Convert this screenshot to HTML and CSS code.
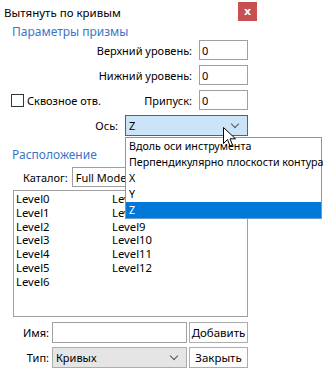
FILE: index.html
```html
<!DOCTYPE html>
<html lang="ru">
<head>
  <meta charset="UTF-8" />
  <title>Вытянуть по кривым</title>
  <link rel="stylesheet" href="styles.css">
</head>
<body>

<div class="win">
  <!-- ===== Title bar ===== -->
  <div class="titlebar">
    <span class="title">Вытянуть по кривым</span>
    <button class="close">x</button>
  </div>

  <!-- ===== Prism params ===== -->
  <div class="group-title">Параметры призмы</div>
  <div class="row first">
    <label>Верхний уровень:</label><input class="num" value="0">
  </div>
  <div class="row">
    <label>Нижний уровень:</label><input class="num" value="0">
  </div>
  <div class="row">
    <span class="check"><span class="box"></span>Сквозное отв.</span>
    <label>Припуск:</label><input class="num" value="0">
  </div>
  <div class="row axis">
    <label>Ось:</label>
    <div class="combo active"><span>Z</span><span class="chev"></span></div>
  </div>

  <!-- ===== Placement ===== -->
  <div class="group-title place">Расположение</div>
  <div class="row cat">
    <label>Каталог:</label>
    <div class="combo plain"><span>Full Model</span></div>
  </div>
  <div class="levels">
    <span>Level0</span><span>Level1</span><span>Level2</span><span>Level3</span>
    <span>Level4</span><span>Level5</span><span>Level6</span>
    <span>Level7</span><span>Level8</span><span>Level9</span><span>Level10</span>
    <span>Level11</span><span>Level12</span>
  </div>

  <div class="row bottom">
    <label>Имя:</label><input class="name" value="">
    <button class="btn">Добавить</button>
  </div>
  <div class="row bottom">
    <label>Тип:</label>
    <div class="combo gray"><span>Кривых</span><span class="chev"></span></div>
    <button class="btn">Закрыть</button>
  </div>

  <!-- ===== Open dropdown (overlay) ===== -->
  <ul class="dropdown">
    <li>Вдоль оси инструмента</li>
    <li>Перпендикулярно плоскости контура</li>
    <li>X</li>
    <li>Y</li>
    <li class="sel">Z</li>
  </ul>

  <!-- mouse pointer -->
  <svg class="pointer" width="13" height="21" viewBox="0 0 13 21">
    <path d="M0.5 0.5 L0.5 16.5 L4.5 12.5 L7 19 L9.5 18 L7 11.8 L12.5 11.8 Z" fill="#fff" stroke="#000" stroke-width="1"/>
  </svg>
</div>

</body>
</html>
```

FILE: styles.css
```css
:root { --blue:#0078d7; --head:#3a76c4; --line:#a0a0a0; }
* { box-sizing:border-box; margin:0; padding:0; }
body { background:#fff; color:#000; font-family:"Noto Sans",Arial,sans-serif; font-size:11px; }

.win{ position:relative; width:260px; }

.titlebar{ height:24px; display:flex; align-items:center; justify-content:space-between; padding-left:4px; }
.title{ font-size:11.5px; }
.close{
  width:19px;height:19px;margin-right:3px;margin-top:-1px;border:none;background:#c75050;color:#fff;
  font:bold 11px "DejaVu Sans",sans-serif;line-height:17px;
}

.group-title{ color:var(--head); font-size:12px; height:16px; line-height:16px; margin-left:12px; }
.group-title.place{ margin-top:11px; }

.row{ display:flex; align-items:center; justify-content:flex-end; width:248px; height:20px; margin-top:5px; }
.row.first{ margin-top:0; }
.row label{ margin-right:7px; }
.num{
  width:49px;height:20px;border:1px solid var(--line);font:inherit;padding:0 2px;outline:none;
}
.check{ display:flex; align-items:center; margin-right:auto; margin-left:11px; }
.check .box{ width:13px;height:13px;border:1px solid #333;background:#fff;margin-right:3px; }

.combo{
  display:flex;align-items:center;justify-content:space-between;height:21px;
  border:1px solid var(--line);padding:0 3px;
}
.combo.active{ width:123px; background:#cce4f7; border-color:var(--blue); }
.chev{
  width:6px;height:6px;border-right:1px solid #555;border-bottom:1px solid #555;
  transform:rotate(45deg);margin:-3px 6px 0 0;
}
.axis{ height:21px; }

.cat{ justify-content:flex-start; margin-top:4px; }
.cat label{ margin-left:23px; margin-right:4px; }
.combo.plain{ width:176px; height:20px; background:#fff; }

.levels{
  margin:3px 0 0 13px;width:235px;height:127px;border:1px solid var(--line);
  display:grid;grid-template-rows:repeat(7,13.8px);grid-template-columns:96px 96px;
  grid-auto-flow:column;padding:1px 0 0 2px;line-height:13.8px;font-size:11.3px;
}

.bottom{ justify-content:flex-start; height:21px; }
.bottom label{ width:49px; text-align:right; margin-right:3px; }
.bottom + .bottom{ margin-top:4px; }
.name{ width:135px;height:21px;border:1px solid var(--line);font:inherit;outline:none; }
.combo.gray{ width:135px; background:#e5e5e5; border-color:#adadad; }
.btn{
  width:59px;height:21px;margin-left:2px;border:1px solid #adadad;background:#fdfdfd;
  font:inherit;font-size:11.5px;color:#000;
}

.dropdown{
  position:absolute;left:125px;top:137px;width:197px;height:82px;
  list-style:none;border:1px solid #6a9fd4;background:#fff;font-size:10.7px;
}
.dropdown li{ height:16px; line-height:16px; padding-left:3px; white-space:nowrap; }
.dropdown li.sel{ background:var(--blue); color:#fff; }

.pointer{ position:absolute; left:223px; top:127px; }
```
